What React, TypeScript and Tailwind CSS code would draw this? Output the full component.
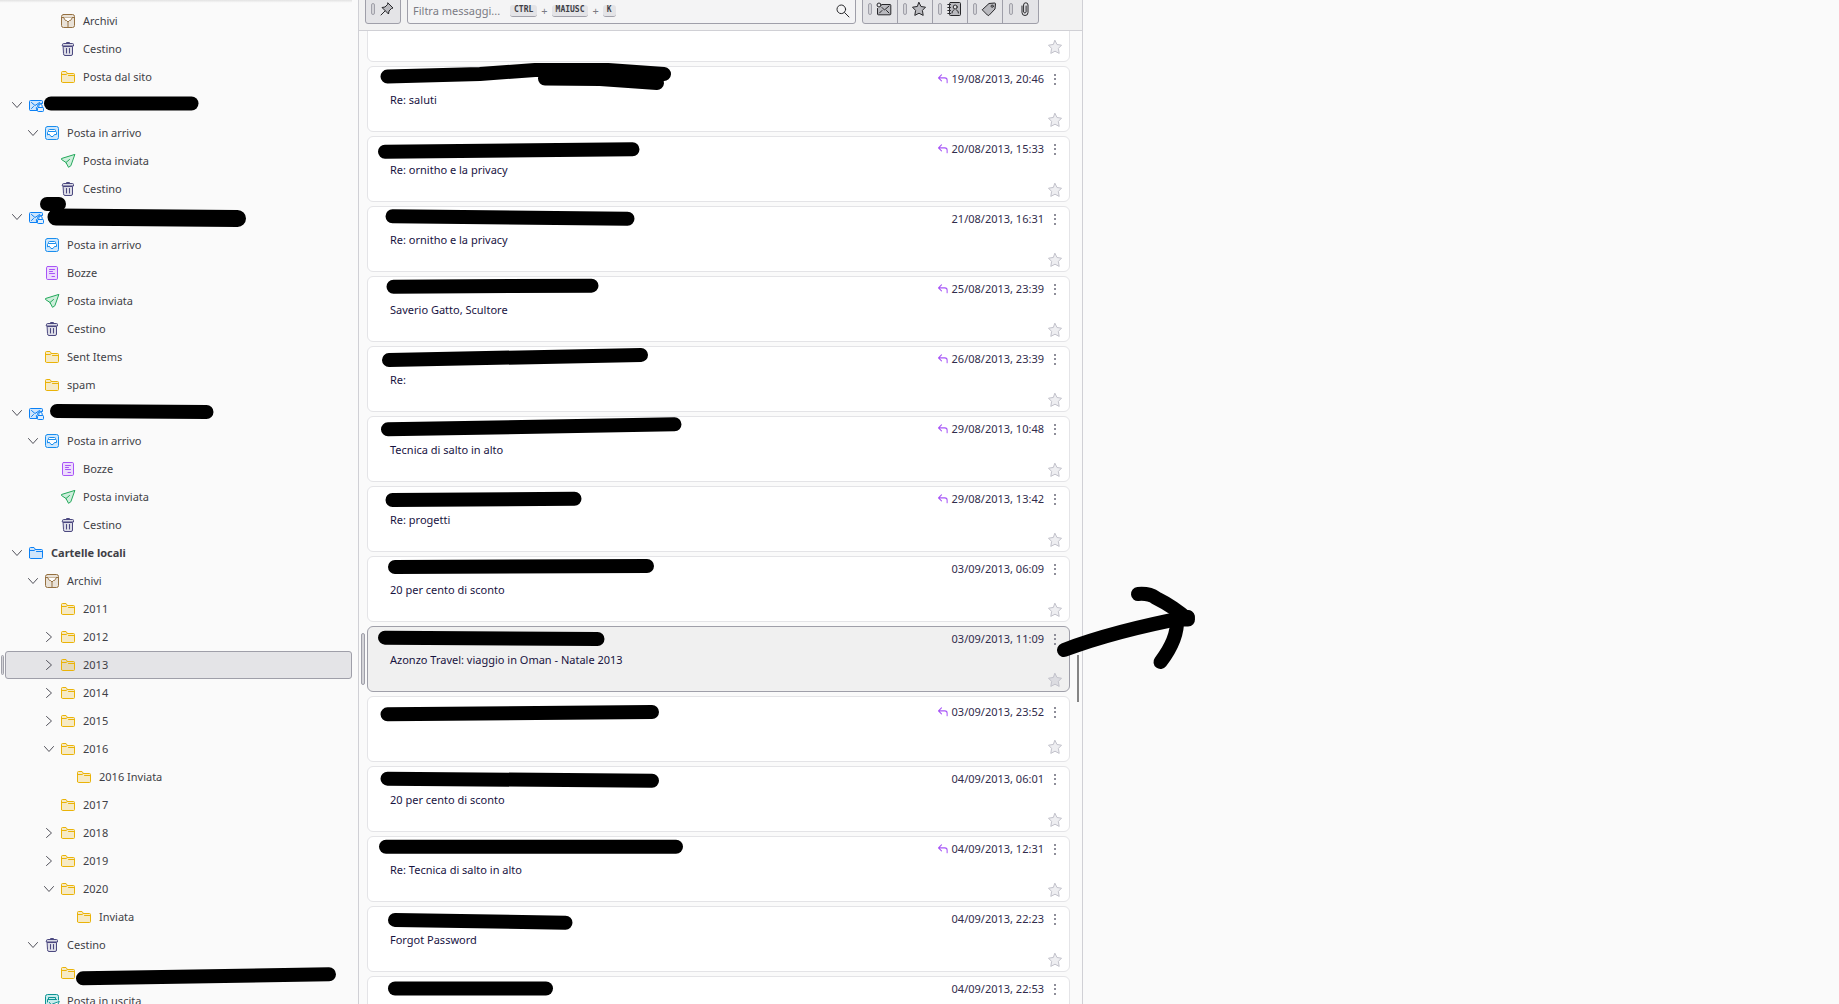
import { useState } from "react";
import type { ReactNode } from "react";
import clsx from "clsx";

type IconName = "archive" | "trash" | "folder" | "local" | "account" | "inbox" | "sent" | "drafts" | "outbox";

type Folder = {
  name: string;
  label?: string;
  icon: IconName;
  level: 0 | 1 | 2 | 3;
  open?: boolean;
  bold?: boolean;
};

type Message = {
  subject: string;
  date: string;
  replied?: boolean;
  compact?: boolean;
};

const folders: Folder[] = [
  { name: "Archivi", icon: "archive", level: 2 },
  { name: "Cestino", icon: "trash", level: 2 },
  { name: "Posta dal sito", icon: "folder", level: 2 },
  { name: "", label: "Account 1", icon: "account", level: 0, open: true },
  { name: "Posta in arrivo", icon: "inbox", level: 1, open: true },
  { name: "Posta inviata", icon: "sent", level: 2 },
  { name: "Cestino", icon: "trash", level: 2 },
  { name: "", label: "Account 2", icon: "account", level: 0, open: true },
  { name: "Posta in arrivo", icon: "inbox", level: 1 },
  { name: "Bozze", icon: "drafts", level: 1 },
  { name: "Posta inviata", icon: "sent", level: 1 },
  { name: "Cestino", icon: "trash", level: 1 },
  { name: "Sent Items", icon: "folder", level: 1 },
  { name: "spam", icon: "folder", level: 1 },
  { name: "", label: "Account 3", icon: "account", level: 0, open: true },
  { name: "Posta in arrivo", icon: "inbox", level: 1, open: true },
  { name: "Bozze", icon: "drafts", level: 2 },
  { name: "Posta inviata", icon: "sent", level: 2 },
  { name: "Cestino", icon: "trash", level: 2 },
  { name: "Cartelle locali", icon: "local", level: 0, open: true, bold: true },
  { name: "Archivi", icon: "archive", level: 1, open: true },
  { name: "2011", icon: "folder", level: 2 },
  { name: "2012", icon: "folder", level: 2, open: false },
  { name: "2013", icon: "folder", level: 2, open: false },
  { name: "2014", icon: "folder", level: 2, open: false },
  { name: "2015", icon: "folder", level: 2, open: false },
  { name: "2016", icon: "folder", level: 2, open: true },
  { name: "2016 Inviata", icon: "folder", level: 3 },
  { name: "2017", icon: "folder", level: 2 },
  { name: "2018", icon: "folder", level: 2, open: false },
  { name: "2019", icon: "folder", level: 2, open: false },
  { name: "2020", icon: "folder", level: 2, open: true },
  { name: "Inviata", icon: "folder", level: 3 },
  { name: "Cestino", icon: "trash", level: 1, open: true },
  { name: "", label: "Archivi nel cestino", icon: "folder", level: 2 },
  { name: "Posta in uscita", icon: "outbox", level: 1 },
];

const messages: Message[] = [
  { subject: "", date: "", compact: true },
  { subject: "Re: saluti", date: "19/08/2013, 20:46", replied: true },
  { subject: "Re: ornitho e la privacy", date: "20/08/2013, 15:33", replied: true },
  { subject: "Re: ornitho e la privacy", date: "21/08/2013, 16:31" },
  { subject: "Saverio Gatto, Scultore", date: "25/08/2013, 23:39", replied: true },
  { subject: "Re:", date: "26/08/2013, 23:39", replied: true },
  { subject: "Tecnica di salto in alto", date: "29/08/2013, 10:48", replied: true },
  { subject: "Re: progetti", date: "29/08/2013, 13:42", replied: true },
  { subject: "20 per cento di sconto", date: "03/09/2013, 06:09" },
  { subject: "Azonzo Travel: viaggio in Oman - Natale 2013", date: "03/09/2013, 11:09" },
  { subject: "", date: "03/09/2013, 23:52", replied: true, compact: true },
  { subject: "20 per cento di sconto", date: "04/09/2013, 06:01" },
  { subject: "Re: Tecnica di salto in alto", date: "04/09/2013, 12:31", replied: true },
  { subject: "Forgot Password", date: "04/09/2013, 22:23" },
  { subject: "", date: "04/09/2013, 22:53" },
];

const indent = ["pl-[3px]", "pl-[19px]", "pl-[35px]", "pl-[51px]"];

const starPath = "M8 1.5 L10 5.5 L14.5 6.2 L11.4 9.4 L12.2 14.4 L8 12.2 L3.8 14.4 L4.6 9.4 L1.5 6.2 L6 5.5 Z";

function Svg({ children, className = "size-4" }: { children: ReactNode; className?: string }) {
  return (
    <svg viewBox="0 0 16 16" fill="none" strokeLinecap="round" strokeLinejoin="round" className={clsx("shrink-0", className)} aria-hidden="true">
      {children}
    </svg>
  );
}

function FolderIcon({ icon }: { icon: IconName }) {
  switch (icon) {
    case "archive":
      return (
        <Svg>
          <g stroke="#957040">
            <rect x="1.5" y="1.5" width="13" height="13" rx="2" fill="#e9e2d8" />
            <path d="M2 4.5 H14" />
            <path d="M3.5 4.5 L5.5 7.5 H6.5 L8 9 L9.5 7.5 H10.5 L12.5 4.5" fill="#ffffff" />
            <path d="M8 9.5 V14" strokeDasharray="1 1" strokeWidth="2" strokeLinecap="butt" />
          </g>
        </Svg>
      );
    case "trash":
      return (
        <Svg>
          <g stroke="#4c4980">
            <path d="M3.5 5.5 H12.5 V13 a1.5 1.5 0 0 1 -1.5 1.5 H5 a1.5 1.5 0 0 1 -1.5 -1.5 Z" fill="#dcdce6" />
            <path d="M2.5 3.5 a1 1 0 0 1 1 -1 H12.5 a1 1 0 0 1 1 1 V5 H2.5 Z" fill="#dcdce6" />
            <path d="M6.5 2.5 V1.5 H9.5 V2.5 M6.5 7.5 V12 M9.5 7.5 V12" />
          </g>
        </Svg>
      );
    case "folder":
    case "local": {
      const local = icon === "local";
      return (
        <Svg>
          <g stroke={local ? "#0a80f5" : "#eab308"}>
            <path d="M1.5 12.5 V3.5 a1 1 0 0 1 1 -1 H6 L7.5 4.5 H13.5 a1 1 0 0 1 1 1 V12.5 a1 1 0 0 1 -1 1 H2.5 a1 1 0 0 1 -1 -1 Z" fill={local ? "#cfe5fb" : "#eab308"} fillOpacity={local ? 1 : 0.22} />
            <path d="M2 5.5 H6 L7.5 4.5 M8.5 6.5 H14" />
          </g>
        </Svg>
      );
    }
    case "account":
      return (
        <Svg>
          <g stroke="#0a80f5">
            <path d="M8.5 13.5 H2.5 a1 1 0 0 1 -1 -1 V4.5 a1 1 0 0 1 1 -1 H13.5 a1 1 0 0 1 1 1 V6.5 C11 6 9.5 7.5 9.5 9.5 L8.5 10.5 Z" fill="#cfe5fb" />
            <path d="M8.5 13.5 H2.5 M3.5 5.5 L7 8.5 L11.5 5.5 M3.5 11.5 L5.5 9.5" />
            <rect x="9.5" y="10.5" width="6" height="4" rx="0.8" fill="#e2effc" />
            <path d="M10.8 10.5 V9 a1.7 1.7 0 0 1 3.4 0 V10.5" />
          </g>
        </Svg>
      );
    case "inbox":
      return (
        <Svg>
          <g stroke="#1a8eee">
            <rect x="1.5" y="1.5" width="13" height="13" rx="2" fill="#cfe7fc" />
            <path d="M4.5 6.5 V5.5 a1 1 0 0 1 1 -1 H10.5 a1 1 0 0 1 1 1 V6.5" fill="#ffffff" />
            <path d="M3.5 9.5 V7.5 a1 1 0 0 1 1 -1 H11.5 a1 1 0 0 1 1 1 V9.5 H10.5 L9 11.5 H7 L5.5 9.5 Z" fill="#ffffff" />
          </g>
        </Svg>
      );
    case "sent":
      return (
        <Svg>
          <g stroke="#22a85a">
            <path d="M14.5 1.5 L1.5 5.5 V6.5 L6 9.5 L8.5 14.3 L10.5 13 Z" fill="#cdeedb" />
            <path d="M6 9.5 L9.5 6.5" />
          </g>
        </Svg>
      );
    case "drafts":
      return (
        <Svg>
          <g stroke="#a855f7">
            <rect x="2.5" y="1.5" width="11" height="13" rx="1.2" fill="#eddcfc" />
            <path d="M5.5 4.5 H10.5 M5.5 6.5 H8.5 M5.5 8.5 H10.5 M8 11.5 H10.5" />
          </g>
        </Svg>
      );
    case "outbox":
      return (
        <Svg>
          <g stroke="#0d9494">
            <path d="M14.5 7 V3.5 a2 2 0 0 0 -2 -2 H3.5 a2 2 0 0 0 -2 2 V12.5 a2 2 0 0 0 2 2 H8" fill="#c7ecec" />
            <path d="M4.5 6.5 V4.5 H11.5 V6.5 M3.5 9 V6.5 H12.5 M5.5 9.5 L7 11.5" />
            <path d="M15 8.5 L8.5 11 L11 12 L12 14.5 Z" fill="#ffffff" />
          </g>
        </Svg>
      );
  }
}

function FolderRow({ folder, selected, onSelect }: { folder: Folder; selected: boolean; onSelect: () => void }) {
  const name = folder.label ?? folder.name;
  return (
    <li className="flex h-7 items-center">
      <span className="flex w-[5px] shrink-0 justify-center">
        {selected && <span className="h-5 w-[3px] rounded-sm border border-[#a1a1aa] bg-[#d4d4d8]" />}
      </span>
      <div
        className={clsx(
          "flex h-full flex-1 items-center rounded-[3px] border",
          indent[folder.level],
          selected ? "border-[#9f9fa9] bg-[#e4e4e7]" : "border-transparent"
        )}
      >
        {folder.open === undefined ? (
          <span className="w-4 shrink-0" />
        ) : (
          <button type="button" aria-label={`Espandi ${name}`} className="size-4 shrink-0">
            <Svg>
              <path d={folder.open ? "M3.5 5.5 L8 10.5 L12.5 5.5" : "M5.5 3.5 L10.5 8 L5.5 12.5"} stroke="#52525b" />
            </Svg>
          </button>
        )}
        <a href="#" aria-label={name} onClick={onSelect} className="ml-[3px] flex flex-1 items-center gap-[7px]">
          <FolderIcon icon={folder.icon} />
          <span className={clsx(folder.bold && "font-bold")}>{folder.name}</span>
        </a>
      </div>
    </li>
  );
}

function MessageCard({ message, selected, onSelect }: { message: Message; selected: boolean; onSelect: () => void }) {
  return (
    <li className="flex items-center">
      <span className="flex w-2 shrink-0 pl-[2px]">
        {selected && <span className="h-[52px] w-1 rounded-sm border border-[#9f9fa9] bg-[#d4d4d8]" />}
      </span>
      <article
        onClick={onSelect}
        className={clsx(
          "flex h-[66px] flex-1 flex-col justify-center rounded-[6px] border pr-[6px] pb-[2px] pl-[22px]",
          selected ? "border-[#9f9fa9] bg-[#f0f0f0]" : "border-[#e4e4e7] bg-white"
        )}
      >
        <div className="flex h-5 items-center justify-end">
          {message.replied && (
            <Svg className="mr-[3px] size-3">
              <path d="M6 2.5 L2 6.5 L6 10.5 M2 6.5 H10.5 a3 3 0 0 1 3 3 V13" stroke="#a855f7" strokeWidth="1.4" />
            </Svg>
          )}
          <time className="text-[#312c4c]">{message.date}</time>
          <button type="button" aria-label="Azioni messaggio" className="ml-[3px] size-4">
            <Svg>
              <path d="M7 3 h2 v2 h-2 Z M7 7 h2 v2 h-2 Z M7 12 h2 v2 h-2 Z" fill="#8e8e99" />
            </Svg>
          </button>
        </div>
        <h3 className={clsx("flex items-center", message.compact ? "h-[17px]" : "h-[23px]")}>{message.subject}</h3>
        <button type="button" aria-label="Speciale" className="size-4 self-end">
          <Svg>
            <path d={starPath} fill={selected ? "#dcdce1" : "#eeeef1"} stroke="#c2c2cb" />
          </Svg>
        </button>
      </article>
    </li>
  );
}

const quickFilters: { label: string; icon: ReactNode }[] = [
  {
    label: "Non letti",
    icon: (
      <>
        <path d="M6 3.5 H14 a0.8 0.8 0 0 1 0.8 0.8 V13 a0.8 0.8 0 0 1 -0.8 0.8 H2.3 a0.8 0.8 0 0 1 -0.8 -0.8 V7.5" fill="#b9b9be" />
        <path d="M6 6.5 L8.5 9 L13 5 M3.5 12 L6 9.5 M13 12 L10.5 9.5" />
        <circle cx="3" cy="4" r="2" />
      </>
    ),
  },
  { label: "Speciali", icon: <path d={starPath} fill="#b9b9be" /> },
  {
    label: "Contatti",
    icon: (
      <>
        <rect x="3.5" y="1.5" width="11" height="13" rx="1" fill="#b9b9be" />
        <path d="M1.8 3.5 H4.5 M1.8 6.5 H4.5 M1.8 9.5 H4.5 M1.8 12.5 H4.5" />
        <circle cx="9.2" cy="6" r="2" fill="#e4e4e7" />
        <path d="M6 12 C6 9.8 7.2 9.5 8 9 M12.4 12 C12.4 9.8 11.2 9.5 10.4 9" />
      </>
    ),
  },
  {
    label: "Etichette",
    icon: (
      <>
        <path d="M1.5 8.5 L8 2.5 L13.5 2 a1 1 0 0 1 1 1 L14 8 L8 14.3 a1 1 0 0 1 -1.3 0 Z" fill="#b9b9be" />
        <circle cx="11.2" cy="5.2" r="1.1" fill="#f4f4f5" />
      </>
    ),
  },
  {
    label: "Allegati",
    icon: <path d="M5 5 V11.5 a3 3 0 0 0 6 0 V4 a2.2 2.2 0 0 0 -4.4 0 V11 a1.3 1.3 0 0 0 2.5 0 V5" />,
  },
];

function Led() {
  return <span className="h-3 w-1 shrink-0 rounded-sm border border-[#a1a1aa] bg-[#d4d4d8]" />;
}

function Kbd({ children }: { children: string }) {
  return (
    <kbd className="flex h-3 items-center rounded-[3px] border-b border-[#a1a1aa] bg-[#e4e4e7] px-1 font-['DejaVu_Sans_Mono',monospace] text-[8px] leading-none font-bold text-[#3f3f46]">
      {children}
    </kbd>
  );
}

function FilterBar() {
  return (
    <header className="flex h-[31px] shrink-0 items-end gap-[6px] overflow-hidden border-b border-[#d0d0d5] bg-[#f2f2f2] pr-[43px] pb-[6px] pl-[6px]">
      <button type="button" aria-label="Mantieni i filtri" className="flex h-[30px] w-9 shrink-0 items-center justify-center gap-1 rounded-[3px] border border-[#9f9fa9] bg-[#e4e4e7]">
        <Led />
        <Svg>
          <g stroke="#27272a">
            <path d="M9 2 L14 7 L12.5 7.5 L10 10 L9.5 13 L3 6.5 L6 6 L8.5 3.5 Z" fill="#b9b9be" />
            <path d="M6 10 L2 14" />
          </g>
        </Svg>
      </button>
      <label className="flex h-[30px] flex-1 items-center rounded-[3px] border border-[#9f9fa9] bg-[#f4f4f5] pt-[3px] pr-1 pl-[5px] text-[#7b7b84]">
        <input type="text" aria-label="Filtra messaggi" placeholder="Filtra messaggi..." className="w-[97px] outline-none placeholder:text-[#7b7b84]" />
        <Kbd>CTRL</Kbd>
        <span className="px-1">+</span>
        <Kbd>MAIUSC</Kbd>
        <span className="px-1">+</span>
        <Kbd>K</Kbd>
        <button type="button" aria-label="Cerca" className="ml-auto size-4">
          <Svg>
            <circle cx="6.3" cy="6.3" r="4.3" stroke="#27272a" />
            <path d="M9.6 9.6 L14 14" stroke="#27272a" />
          </Svg>
        </button>
      </label>
      <div className="flex h-[30px] shrink-0 divide-x divide-[#9f9fa9] overflow-hidden rounded-[3px] border border-[#9f9fa9] bg-[#e4e4e7]">
        {quickFilters.map((filter) => (
          <button key={filter.label} type="button" aria-label={filter.label} className="flex w-[35px] items-center justify-center gap-1">
            <Led />
            <Svg>
              <g stroke="#27272a">{filter.icon}</g>
            </Svg>
          </button>
        ))}
      </div>
    </header>
  );
}

// Freehand marker over the private names, plus the arrow towards the empty pane
function Marker() {
  return (
    <svg className="pointer-events-none absolute top-0 left-0" width="1839" height="1004" fill="none" stroke="#000000" strokeWidth="14" strokeLinecap="round" strokeLinejoin="round" aria-hidden="true">
      <path d="M51 103.5 H191.5" />
      <path d="M47 204 H59" />
      <path d="M56 217 L237.5 218.5" strokeWidth="17" />
      <path d="M57 411 L206.5 412" />
      <path d="M83 978.3 L329 974.3" />
      <path d="M387.5 76.5 L480 74 L535 70 H608 L664 74" />
      <path d="M545 78.5 L600 79 L657 83" />
      <path d="M385 151.7 L632.5 149.3" />
      <path d="M392.5 216.3 L627.5 218.7" />
      <path d="M393.5 286.7 L591.5 285.7" />
      <path d="M389 360 L641 355" />
      <path d="M388 429.3 L674.5 424.3" />
      <path d="M392.5 500 L574.5 498.8" />
      <path d="M395 567 L647 566" />
      <path d="M385 637.7 L597.5 639" />
      <path d="M387.5 714.3 L652 712" />
      <path d="M387.5 778.7 L652 780.7" />
      <path d="M386 846.8 H676" />
      <path d="M395 920 L565.5 922.7" />
      <path d="M395 988.5 H546" />
      <path d="M1064 650 Q1114 631 1188 617" />
      <path d="M1138 594 Q1149 593 1156 598 Q1174 607 1188 619.5 H1177 Q1178 639 1160.5 662" />
    </svg>
  );
}

export default function App() {
  const [folder, setFolder] = useState(23);
  const [message, setMessage] = useState(9);

  return (
    <div className="relative flex h-screen overflow-hidden bg-[#fafafa] font-['Noto_Sans','Open_Sans',sans-serif] text-[11px] leading-4">
      <nav className="w-[359px] shrink-0 overflow-hidden border-r border-[#d0d0d5] pr-[6px] text-[#3f3f46]">
        <div className="h-[7px] bg-linear-to-b from-[#e2e2e2] to-[#fafafa] to-40%" />
        <ul>
          {folders.map((item, i) => (
            <FolderRow key={i} folder={item} selected={i === folder} onSelect={() => setFolder(i)} />
          ))}
        </ul>
      </nav>

      <section className="relative flex w-[724px] shrink-0 flex-col border-r border-[#d0d0d5]">
        <FilterBar />
        {/* the list is scrolled, so the first card is cut off by the filter bar */}
        <div className="min-h-0 flex-1 overflow-hidden pr-3">
          <ul className="-mt-[35px] flex flex-col gap-1 text-[#18133f]">
            {messages.map((item, i) => (
              <MessageCard key={i} message={item} selected={i === message} onSelect={() => setMessage(i)} />
            ))}
          </ul>
        </div>
        <span className="absolute top-[655px] right-[3px] h-[47px] w-[2px] bg-[#858585]" />
      </section>

      <main className="flex-1" />

      <Marker />
    </div>
  );
}
